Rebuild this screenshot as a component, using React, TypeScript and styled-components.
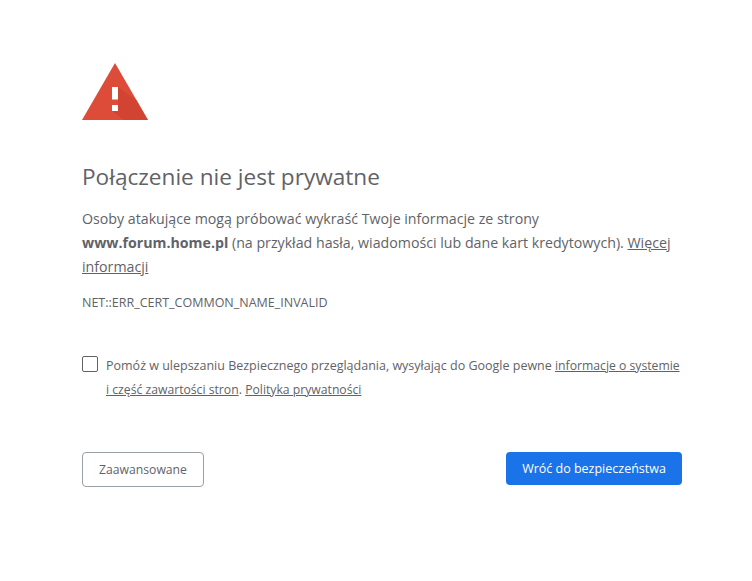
import React from 'react';
import styled, { createGlobalStyle } from 'styled-components';

const GlobalStyle = createGlobalStyle`
  html, body {
    margin: 0;
    padding: 0;
    background: #fff;
  }
`;

const WarningIcon = () => (
  <svg width="72" height="72" viewBox="0 0 72 72" aria-hidden="true">
    <path d="M3 60 L36 3 L69 60 Z" fill="#dd4b39" />
    <path d="M39 27 L57.5 40 L69 60 L45 60 L33 51 L39 45 Z" fill="#c9402f" opacity="0.6" />
    <rect x="33" y="27" width="6" height="12.5" fill="#fff" />
    <rect x="33" y="45" width="6" height="6" fill="#fff" />
  </svg>
);

export default function App() {
  return (
    <>
      <GlobalStyle />
      <Page>
        <IconSlot>
          <WarningIcon />
        </IconSlot>
        <Title>Połączenie nie jest prywatne</Title>
        <Body>
          Osoby atakujące mogą próbować wykraść Twoje informacje ze strony <strong>www.forum.home.pl</strong> (na
          przykład hasła, wiadomości lub dane kart kredytowych). <a href="#more">Więcej informacji</a>
        </Body>
        <ErrorCode>NET::ERR_CERT_COMMON_NAME_INVALID</ErrorCode>
        <OptIn>
          <CheckBox type="checkbox" />
          <OptInText>
            Pomóż w ulepszaniu Bezpiecznego przeglądania, wysyłając do Google pewne{' '}
            <a href="#system">informacje o systemie i część zawartości stron</a>.{' '}
            <a href="#privacy">Polityka prywatności</a>
          </OptInText>
        </OptIn>
        <Actions>
          <SecondaryButton>Zaawansowane</SecondaryButton>
          <PrimaryButton>Wróć do bezpieczeństwa</PrimaryButton>
        </Actions>
      </Page>
    </>
  );
}

const Page = styled.main`
  box-sizing: border-box;
  width: 600px;
  margin-left: 82px;
  padding-top: 60px;
  font-family: 'Open Sans', 'Noto Sans', sans-serif;
  color: #5f6368;
`;

const IconSlot = styled.div`
  width: 72px;
  height: 72px;
  margin-left: -3px;
`;

const Title = styled.h1`
  margin: 27px 0 0;
  font-size: 22.6px;
  line-height: 36px;
  font-weight: 400;
  color: #5f6368;
`;

const Body = styled.p`
  margin: 12px 0 0;
  font-size: 14.2px;
  line-height: 24px;

  strong {
    font-weight: 700;
  }

  a {
    color: #5f6368;
    text-decoration: underline;
  }
`;

const ErrorCode = styled.div`
  margin-top: 12px;
  font-size: 12.5px;
  line-height: 24px;
`;

const OptIn = styled.div`
  display: flex;
  align-items: flex-start;
  gap: 8px;
  margin-top: 39px;
`;

const CheckBox = styled.input`
  appearance: none;
  flex: none;
  box-sizing: border-box;
  width: 16px;
  height: 16px;
  margin: 2px 0 0;
  border: 1px solid #5f6368;
  border-radius: 2px;
  background: #fff;
`;

const OptInText = styled.p`
  margin: 0;
  font-size: 12.5px;
  line-height: 24px;

  a {
    color: #5f6368;
    font-size: 12.2px;
    text-decoration: underline;
  }
`;

const Actions = styled.div`
  display: flex;
  justify-content: space-between;
  align-items: flex-start;
  margin-top: 50px;
`;

const SecondaryButton = styled.button`
  box-sizing: border-box;
  width: 122px;
  height: 35px;
  padding: 0;
  border: 1px solid #9aa0a6;
  border-radius: 4px;
  background: #fff;
  color: #5f6368;
  font-family: inherit;
  font-size: 12.2px;
`;

const PrimaryButton = styled.button`
  box-sizing: border-box;
  width: 176px;
  height: 33px;
  padding: 0;
  border: none;
  border-radius: 4px;
  background: #1a73e8;
  color: #fff;
  font-family: inherit;
  font-size: 12.5px;
`;
